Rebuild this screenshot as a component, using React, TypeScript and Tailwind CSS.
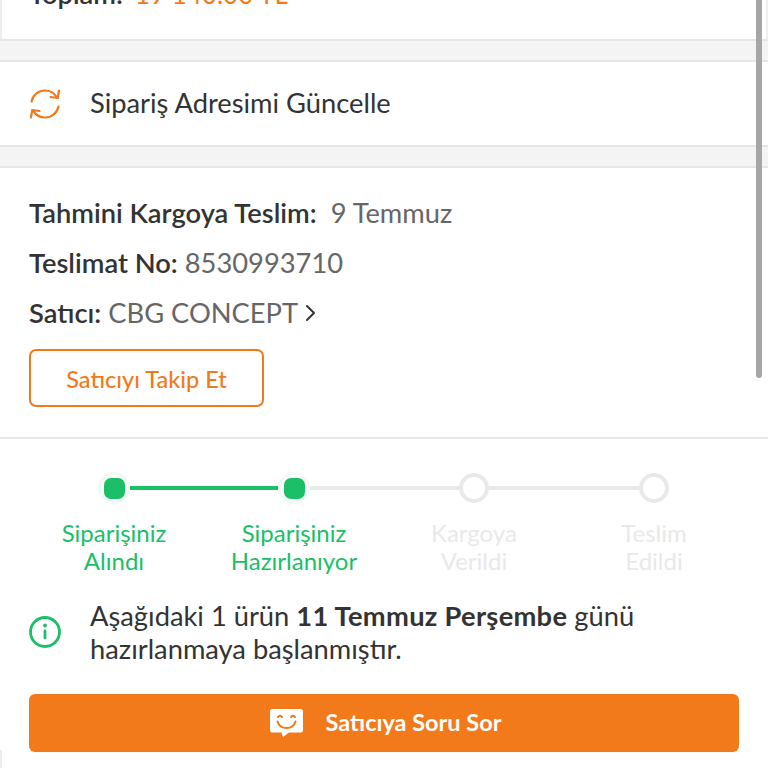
const lato = { fontFamily: "Lato, sans-serif" };

type Step = { top: string; bottom: string; done: boolean };

const steps: Step[] = [
  { top: "Siparişiniz", bottom: "Alındı", done: true },
  { top: "Siparişiniz", bottom: "Hazırlanıyor", done: true },
  { top: "Kargoya", bottom: "Verildi", done: false },
  { top: "Teslim", bottom: "Edildi", done: false },
];

function RefreshIcon() {
  return (
    <svg width="32" height="30" viewBox="0 0 32 30" fill="none" stroke="#F27A1A" strokeWidth="2.2" strokeLinecap="round" strokeLinejoin="round">
      <path d="M2.500 12.500C4 5.800 9.500 1.500 16 1.500c4.800 0 9 2.300 11.500 6.300" />
      <path d="M30 1.500 28.800 9l-7.300-1" />
      <path d="M29.500 17.500C28 24.200 22.500 28.500 16 28.500c-4.800 0-9-2.300-11.500-6.300" />
      <path d="M2 28.500 3.200 21l7.300 1" />
    </svg>
  );
}

function ChatSmile() {
  return (
    <svg width="33" height="28" viewBox="0 0 33 28">
      <path d="M2.500 0h28a2.500 2.500 0 0 1 2.500 2.500v18.500a2.500 2.500 0 0 1-2.500 2.500H19l-6 4.500-1.500-4.500h-9a2.500 2.500 0 0 1-2.500-2.500V2.500A2.500 2.500 0 0 1 2.500 0z" fill="#fff" />
      <g fill="none" stroke="#F27A1A" strokeWidth="2" strokeLinecap="round">
        <path d="M8 8c.8-1.600 3.200-1.600 4 0" />
        <path d="M21 8c.8-1.600 3.200-1.600 4 0" />
        <path d="M7.500 12.500c1.300 4.500 4.500 6.500 9 6.500s7.700-2 9-6.500" />
      </g>
    </svg>
  );
}

function InfoIcon() {
  return (
    <svg width="32" height="32" viewBox="0 0 32 32" fill="none">
      <circle cx="16" cy="16" r="14.500" stroke="#1BBF68" strokeWidth="2.800" />
      <rect x="14.600" y="13.500" width="2.800" height="10" rx="1.400" fill="#1BBF68" />
      <circle cx="16" cy="9.500" r="1.900" fill="#1BBF68" />
    </svg>
  );
}

function Tracker() {
  return (
    <div className="mt-[30px] grid grid-cols-4 w-[720px] ml-[24px] relative">
      <div className="absolute left-[90px] right-[90px] top-[17px] h-[4px] bg-[#E9E9E9]" />
      <div className="absolute left-[90px] w-[180px] top-[17px] h-[4px] bg-[#1BBF68]" />
      {steps.map((s) => (
        <div key={s.bottom} className="flex flex-col items-center relative">
          {s.done ? (
            <div className="w-[32px] h-[32px] my-[3px] rounded-full bg-[#EFFAF4] flex items-center justify-center">
              <div className="w-[26px] h-[26px] rounded-full bg-white flex items-center justify-center">
                <div className="w-[21px] h-[21px] rounded-[7px] bg-[#1BBF68]" />
              </div>
            </div>
          ) : (
            <div className="w-[30px] h-[30px] my-[4px] rounded-full border-[4px] border-[#E9E9E9] bg-white" />
          )}
          <div className={`mt-[12px] text-center text-[24px] leading-[28px] ${s.done ? "text-[#1BBF68]" : "text-[#E9E9E9]"}`}>
            <div>{s.top}</div>
            <div>{s.bottom}</div>
          </div>
        </div>
      ))}
    </div>
  );
}

export default function App() {
  return (
    <div className="w-[768px] h-[768px] overflow-hidden bg-white relative" style={lato}>
      <div className="h-[39px] flex items-end px-[30px] border-x-2 border-[#EEEEEE] overflow-hidden">
        <div className="text-[27.3px] leading-[32px] mb-[29px] -ml-[3px] whitespace-nowrap">
          <span className="font-semibold text-[#333333]">Toplam:</span>
          <span className="ml-[12px] text-[26px] text-[#F27A1A]">19 140.00 TL</span>
        </div>
      </div>

      <div className="h-[23px] bg-[#F4F4F4] border-y-2 border-[#E6E6E6]" />

      <div className="h-[83px] flex items-center px-[29px]">
        <RefreshIcon />
        <span className="ml-[29px] text-[27.3px] text-[#333333]">Sipariş Adresimi Güncelle</span>
      </div>

      <div className="h-[23px] bg-[#F4F4F4] border-y-2 border-[#E6E6E6]" />

      <div className="h-[271px] px-[29px] border-b-2 border-[#E6E6E6] text-[27.3px] leading-[50px]">
        <div className="pt-[20px]">
          <div className="whitespace-nowrap">
            <span className="font-semibold text-[#333333]">Tahmini Kargoya Teslim:</span>
            <span className="ml-[14px] text-[#666666]">9 Temmuz</span>
          </div>
          <div className="whitespace-nowrap">
            <span className="font-semibold text-[#333333]">Teslimat No:</span>
            <span className="ml-[7px] text-[#666666]">8530993710</span>
          </div>
          <div className="whitespace-nowrap flex items-center">
            <span className="font-semibold text-[#333333]">Satıcı:</span>
            <span className="ml-[7px] text-[#666666]">CBG CONCEPT</span>
            <svg className="ml-[7px]" width="11" height="18" viewBox="0 0 11 18" fill="none" stroke="#333333" strokeWidth="2" strokeLinecap="round" strokeLinejoin="round">
              <path d="M2 2l7 7-7 7" />
            </svg>
          </div>
        </div>
        <button className="mt-[11px] w-[235px] h-[58px] rounded-[7px] border-2 border-[#F27A1A] text-[23.5px] font-medium text-[#F27A1A] flex items-center justify-center pt-[1px]">
          Satıcıyı Takip Et
        </button>
      </div>

      <Tracker />

      <div className="mt-[24px] mx-[29px] flex items-center text-[27.3px] leading-[33px] text-[#333333]">
        <InfoIcon />
        <p className="ml-[29px] whitespace-nowrap">
          Aşağıdaki 1 ürün <span className="font-bold tracking-[0.28px]">11 Temmuz Perşembe</span> günü
          <br />
          hazırlanmaya başlanmıştır.
        </p>
      </div>

      <button className="mt-[29px] ml-[29px] w-[710px] h-[58px] rounded-[6px] bg-[#F27A1A] flex items-center justify-center pl-[3px] text-white text-[23.5px] font-bold">
        <ChatSmile />
        <span className="ml-[23px]">Satıcıya Soru Sor</span>
      </button>

      <div className="absolute right-[6px] top-0 w-[6px] h-[378px] rounded-b-full bg-[#A6A6A6]" />
      <div className="absolute left-0 bottom-0 w-[2px] h-[18px] bg-[#EEEEEE]" />
    </div>
  );
}
